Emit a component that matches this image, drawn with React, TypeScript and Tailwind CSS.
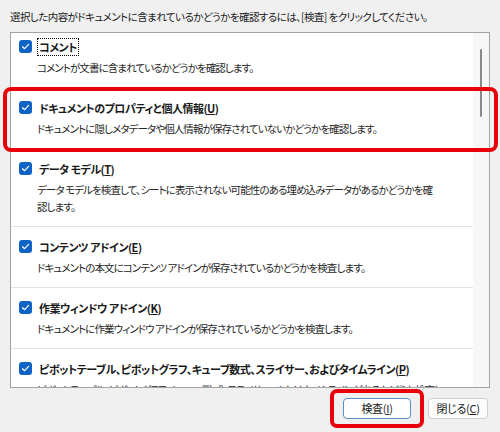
import type { ReactNode } from 'react';

const FONT = { fontFamily: '"Noto Sans CJK JP", "Noto Sans", sans-serif' };

type Item = {
  title: ReactNode;
  desc: ReactNode;
  focused?: boolean;
};

const ITEMS: Item[] = [
  {
    title: 'コメント',
    desc: 'コメントが文書に含まれているかどうかを確認します。',
    focused: true,
  },
  {
    title: (
      <>
        ドキュメントのプロパティと個人情報(<u>U</u>)
      </>
    ),
    desc: 'ドキュメントに隠しメタデータや個人情報が保存されていないかどうかを確認します。',
  },
  {
    title: (
      <>
        データ モデル(<u>T</u>)
      </>
    ),
    desc: (
      <>
        データ モデルを検査して、シートに表示されない可能性のある埋め込みデータがあるかどうかを確
        <br />
        認します。
      </>
    ),
  },
  {
    title: (
      <>
        コンテンツ アドイン(<u>E</u>)
      </>
    ),
    desc: 'ドキュメントの本文にコンテンツ アドインが保存されているかどうかを検査します。',
  },
  {
    title: (
      <>
        作業ウィンドウ アドイン(<u>K</u>)
      </>
    ),
    desc: 'ドキュメントに作業ウィンドウ アドインが保存されているかどうかを検査します。',
  },
  {
    title: (
      <>
        ピボットテーブル、ピボットグラフ、キューブ数式、スライサー、およびタイムライン(<u>P</u>)
      </>
    ),
    desc: (
      <>
        ピボットテーブル、ピボットグラフ、キューブ数式、スライサー、またはタイムラインがあるかどうか検査し、
        <br />
        ます。
      </>
    ),
  },
];

function CheckBox() {
  return (
    <span className="flex h-[13px] w-[13px] shrink-0 items-center justify-center rounded-[3px] bg-[#0f63c4]">
      <svg width="9" height="9" viewBox="0 0 9 9" fill="none">
        <path d="M1.5 4.7 L3.6 6.7 L7.6 2.3" stroke="white" strokeWidth="1.2" strokeLinecap="round" strokeLinejoin="round" />
      </svg>
    </span>
  );
}

function Row({ item, first }: { item: Item; first?: boolean }) {
  return (
    <div className={`border-b border-[#e3e3e3] pb-[11px] pl-[8px] pt-[11px] ${first ? '-mt-[6px]' : ''}`}>
      <div className="flex h-[20px] items-start gap-[5px] pt-[2px]">
        <CheckBox />
        <span
          className={`-mt-[2px] whitespace-nowrap px-px text-[11px] font-bold leading-[16px] tracking-[-0.5px] text-[#1a1a1a] ${
            item.focused ? 'border border-dotted border-black' : 'border border-transparent'
          }`}
        >
          {item.title}
        </span>
      </div>
      <p className="whitespace-nowrap pl-[18px] pt-px text-[10.5px] leading-[17px] tracking-[-0.9px] text-[#262626]">
        {item.desc}
      </p>
    </div>
  );
}

export default function App() {
  return (
    <div
      className="relative h-[432px] w-[500px] overflow-hidden bg-[#f0f0f0] [font-feature-settings:'palt']"
      style={FONT}
    >
      {/* Instruction */}
      <p className="h-[32px] pl-[10px] pt-[8px] text-[10.5px] leading-[18px] tracking-[-0.55px] text-[#1a1a1a]">
        選択した内容がドキュメントに含まれているかどうかを確認するには、[検査] をクリックしてください。
      </p>

      {/* List box */}
      <div className="mx-[10px] flex h-[356px] border border-[#a3a3a3] bg-white">
        <div className="flex-1 overflow-hidden">
          {ITEMS.map((item, i) => (
            <Row key={i} item={item} first={i === 0} />
          ))}
        </div>
        <div className="w-[16px] shrink-0 bg-[#f7f7f7] pt-[16px]">
          <div className="ml-[7px] h-[68px] w-[2px] rounded-full bg-[#8a8a8a]" />
        </div>
      </div>

      {/* Buttons */}
      <div className="flex justify-end gap-[17px] pr-[12px] pt-[10px]">
        <button className="h-[21px] w-[68px] rounded-[4px] border border-[#5b8fc7] bg-white text-[11px] leading-none tracking-[-0.3px] text-[#1a1a1a]">
          検査(<u>I</u>)
        </button>
        <button className="h-[21px] w-[60px] rounded-[4px] border border-[#cfcfcf] bg-[#fdfdfd] text-[11px] leading-none tracking-[-0.3px] text-[#1a1a1a]">
          閉じる(<u>C</u>)
        </button>
      </div>

      {/* Annotations */}
      <div className="pointer-events-none absolute left-[3px] top-[87px] h-[65px] w-[495px] rounded-[8px] border-[4px] border-[#e8000b]" />
      <div className="pointer-events-none absolute left-[330px] top-[389px] h-[39px] w-[94px] rounded-[7px] border-[4px] border-[#e8000b]" />
    </div>
  );
}
